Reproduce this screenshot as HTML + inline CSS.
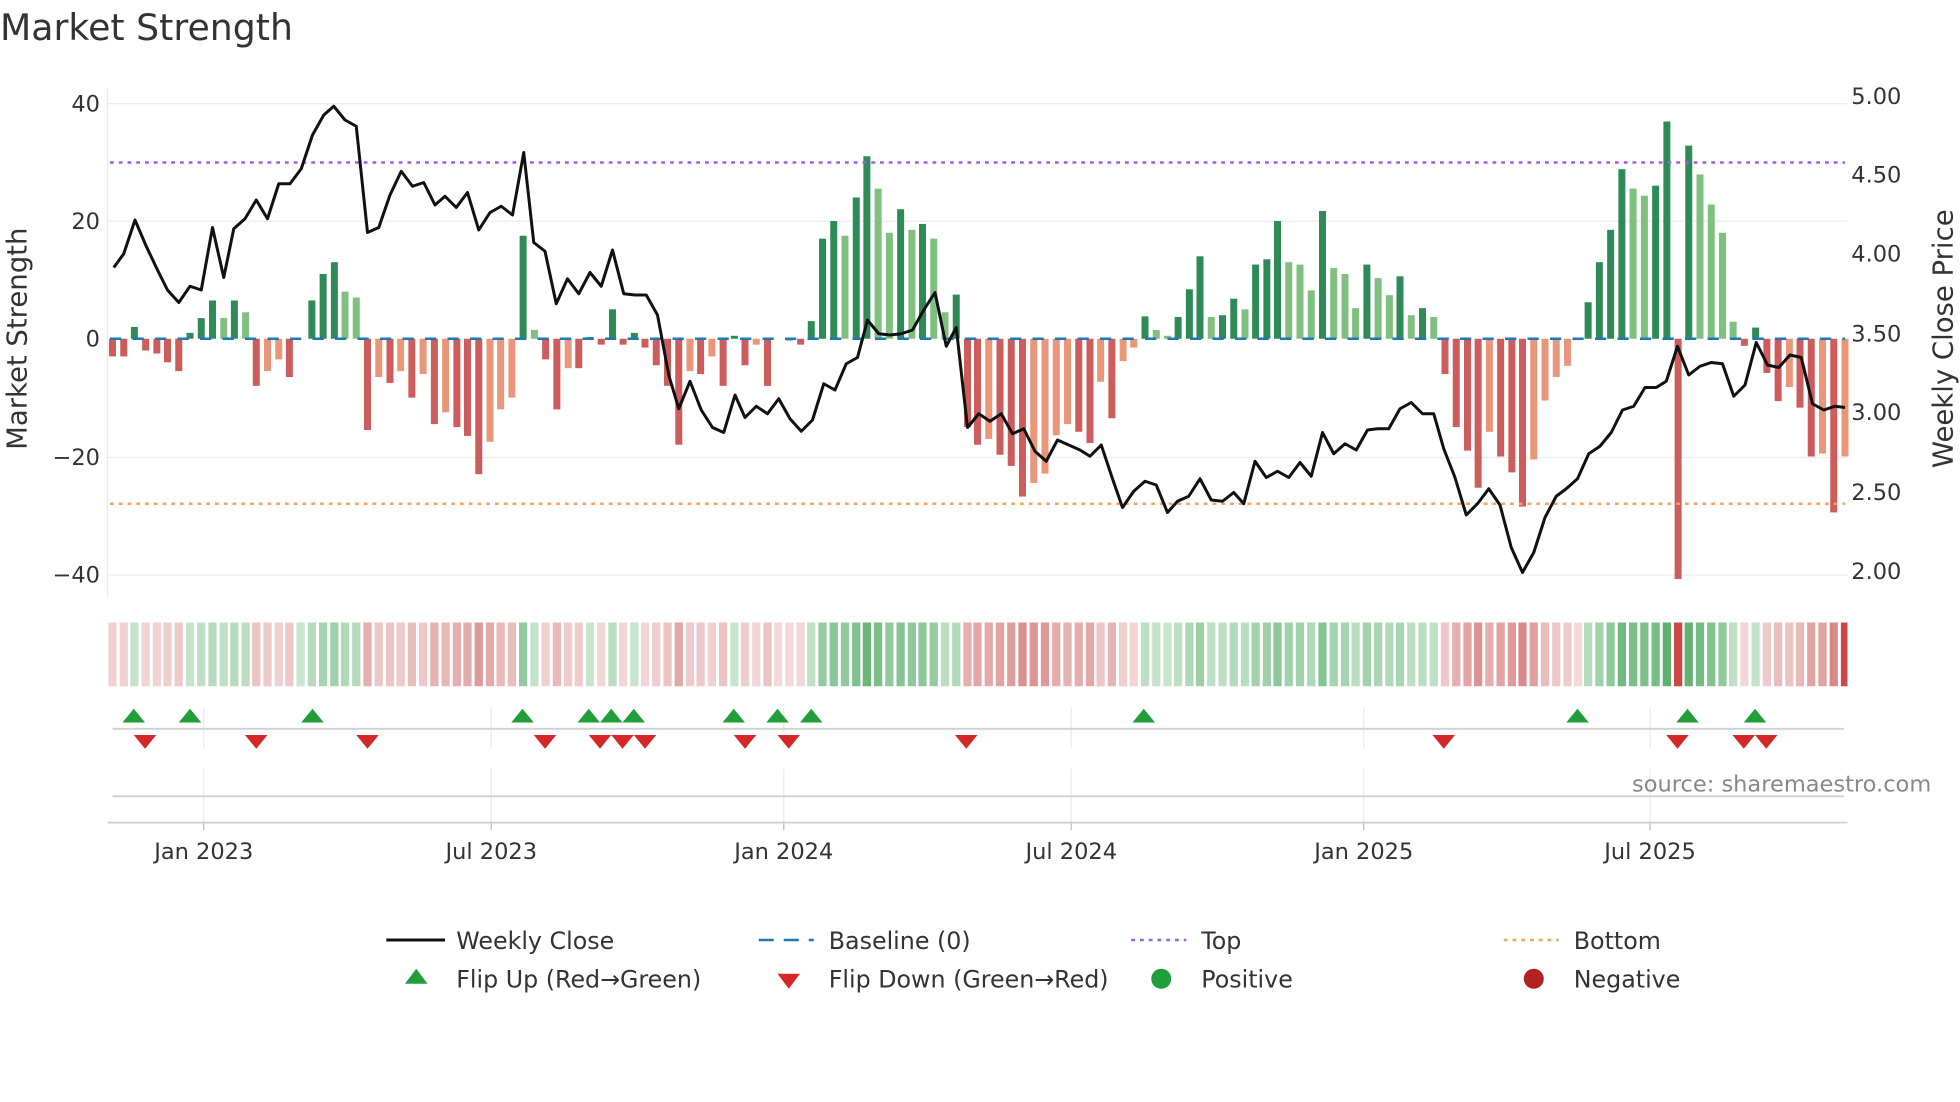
<!DOCTYPE html>
<html><head><meta charset="utf-8"><style>
html,body{margin:0;padding:0;background:#fff;width:1960px;height:1102px;overflow:hidden}
svg{display:block}
text{font-family:"DejaVu Sans","Liberation Sans",sans-serif;fill:#333}
</style></head><body>
<svg id="s" width="1960" height="1102" viewBox="0 0 1568 881.6" xmlns="http://www.w3.org/2000/svg">
<defs><clipPath id="hc"><rect x="86" y="490" width="1392" height="70"/></clipPath></defs>
<text x="0" y="32" font-size="29">Market Strength</text>
<g stroke="#ececf0" stroke-width="1">
<line x1="86" y1="83" x2="1478" y2="83"/><line x1="86" y1="177" x2="1478" y2="177"/><line x1="86" y1="366" x2="1478" y2="366"/><line x1="86" y1="460" x2="1478" y2="460"/>
<line x1="86" y1="70" x2="86" y2="478"/>
</g>
<g font-size="18" text-anchor="end">
<text x="80" y="89">40</text><text x="80" y="183">20</text><text x="80" y="277">0</text><text x="80" y="372">−20</text><text x="80" y="466">−40</text>
</g>
<g font-size="18">
<text x="1481" y="83">5.00</text><text x="1481" y="146">4.50</text><text x="1481" y="209">4.00</text><text x="1481" y="273">3.50</text><text x="1481" y="336">3.00</text><text x="1481" y="400">2.50</text><text x="1481" y="463">2.00</text>
</g>
<text transform="translate(21,271) rotate(-90)" font-size="22" text-anchor="middle">Market Strength</text>
<text transform="translate(1562,271) rotate(-90)" font-size="22" text-anchor="middle">Weekly Close Price</text>
<g id="bars"></g>
<line x1="88" y1="271" x2="1476" y2="271" stroke="#1f77b4" stroke-width="2" stroke-dasharray="9,9"/>
<line x1="88" y1="130" x2="1476" y2="130" stroke="#9b5de5" stroke-width="2" stroke-dasharray="3,4"/>
<line x1="88" y1="403" x2="1476" y2="403" stroke="#f4a261" stroke-width="2" stroke-dasharray="3,4"/>
<polyline id="pl" fill="none" stroke="#111" stroke-width="2.4" stroke-linejoin="round"/>
<g id="heat" clip-path="url(#hc)"></g>
<g stroke="#e8e8ee" stroke-width="1" id="vg"></g>
<line x1="90" y1="583" x2="1475" y2="583" stroke="#d0d0d0" stroke-width="1.5"/>
<line x1="90" y1="637" x2="1475" y2="637" stroke="#d0d0d0" stroke-width="1.5"/>
<line x1="86" y1="658" x2="1478" y2="658" stroke="#d0d0d0" stroke-width="1.5"/>
<g id="tri"></g>
<text x="1545" y="633" font-size="18" text-anchor="end" style="fill:#888">source: sharemaestro.com</text>
<g font-size="18" text-anchor="middle" id="dates"></g>
<g font-size="19">
<line x1="309" y1="752" x2="356" y2="752" stroke="#111" stroke-width="2.4"/><text x="365" y="759">Weekly Close</text>
<line x1="607" y1="752" x2="651" y2="752" stroke="#1f77b4" stroke-width="2" stroke-dasharray="12,8"/><text x="663" y="759">Baseline (0)</text>
<line x1="905" y1="752" x2="949" y2="752" stroke="#9b5de5" stroke-width="2" stroke-dasharray="3,4"/><text x="961" y="759">Top</text>
<line x1="1203" y1="752" x2="1247" y2="752" stroke="#f4a261" stroke-width="2" stroke-dasharray="3,4"/><text x="1259" y="759">Bottom</text>
<polygon points="324,787 342,787 333,775" fill="#1f9e3a"/><text x="365" y="790">Flip Up (Red→Green)</text>
<polygon points="622,779 640,779 631,791" fill="#d62728"/><text x="663" y="790">Flip Down (Green→Red)</text>
<circle cx="929" cy="783" r="8" fill="#1f9e3a"/><text x="961" y="790">Positive</text>
<circle cx="1227" cy="783" r="8" fill="#b22222"/><text x="1259" y="790">Negative</text>
</g>
</svg>
<script>
var NS="http://www.w3.org/2000/svg";
function el(p,t,a){var e=document.createElementNS(NS,t);for(var k in a)e.setAttribute(k,a[k]);p.appendChild(e);return e;}
var z1=[[180,-3,'R'],[198,-3,'R'],[215,2,'G'],[233,-2,'R'],[251,-2.5,'R'],[268,-4,'R'],[286,-5.5,'R'],[304,1,'G'],[322,3.5,'G'],[340,6.5,'G'],[358,3.5,'g'],[375,6.5,'G'],[393,4.5,'g'],[410,-8,'R'],[428,-5.5,'r'],[446,-3.5,'r'],[463,-6.5,'R'],[481,0,'G'],[499,6.5,'G'],[517,11,'G'],[535,13,'G'],[552,8,'g'],[570,7,'g'],[588,-15.5,'R'],[606,-6.5,'r'],[624,-7.5,'R'],[641,-5.5,'r'],[659,-10,'R'],[677,-6,'r'],[695,-14.5,'R'],[713,-12.5,'r'],[731,-15,'R'],[748,-16.5,'R'],[766,-23,'R'],[784,-17.5,'r'],[801,-12,'r'],[819,-10,'r'],[837,17.5,'G'],[855,1.5,'g'],[873,-3.5,'R'],[891,-12,'R'],[909,-5,'r'],[926,-5,'R'],[944,0.3,'G'],[962,-1,'R'],[980,5,'G'],[997,-1,'R'],[1015,1,'G'],[1032,-1.5,'R'],[1050,-4.5,'R'],[1068,-8,'R'],[1086,-18,'R'],[1104,-5.5,'r'],[1121,-6,'R'],[1139,-3,'r'],[1157,-8,'R'],[1175,0.5,'G'],[1192,-4.5,'R'],[1210,-1,'r'],[1228,-8,'R'],[1245,0,'R'],[1263,-0.3,'R'],[1281,-1,'R'],[1298,3,'G'],[1316,17,'G'],[1334,20,'G'],[1352,17.5,'g'],[1370,24,'G'],[1387,31,'G'],[1405,25.5,'g'],[1423,18,'g'],[1441,22,'G'],[1459,18.5,'g'],[1476,19.5,'G'],[1494,17,'g'],[1512,4.5,'g'],[1530,7.5,'G'],[1548,-15,'R']];
var z2=[[-4,-18,'R'],[14,-17,'r'],[32,-19.7,'R'],[50,-21.6,'R'],[68,-26.8,'R'],[86,-24.5,'r'],[104,-22.9,'r'],[122,-16.4,'r'],[140,-14.5,'r'],[158,-15.8,'R'],[176,-17.7,'R'],[193,-7.3,'r'],[211,-13.5,'R'],[229,-3.8,'r'],[246,-1.5,'r'],[264,3.8,'G'],[282,1.5,'g'],[300,0.5,'g'],[317,3.7,'G'],[335,8.4,'G'],[352,14,'G'],[370,3.7,'g'],[388,4,'G'],[406,6.8,'G'],[424,5,'g'],[441,12.6,'G'],[459,13.5,'G'],[476,20,'G'],[494,13,'g'],[512,12.6,'g'],[530,8.2,'g'],[548,21.7,'G'],[566,12,'g'],[584,11,'g'],[601,5.2,'g'],[619,12.6,'G'],[637,10.3,'g'],[655,7.4,'g'],[672,10.6,'G'],[690,4,'g'],[708,5.2,'G'],[726,3.7,'g'],[744,-6,'R'],[762,-15,'R'],[780,-19,'R'],[797,-25.3,'R'],[815,-15.8,'r'],[833,-20,'R'],[851,-22.7,'R'],[868,-28.5,'R'],[886,-20.5,'r'],[904,-10.5,'r'],[922,-6.5,'r'],[940,-4.6,'r'],[957,0,'r'],[973,6.2,'G'],[991,13,'G'],[1009,18.5,'G'],[1027,28.8,'G'],[1045,25.5,'g'],[1063,24.3,'g'],[1081,26,'G'],[1099,36.9,'G'],[1117,-40.8,'R'],[1134,32.8,'G'],[1152,27.9,'g'],[1170,22.8,'g'],[1188,18,'g'],[1205,2.9,'g'],[1223,-1.2,'R'],[1241,1.9,'G'],[1259,-5.8,'R'],[1277,-10.6,'R'],[1295,-8.2,'r'],[1312,-11.7,'R'],[1330,-20,'R'],[1348,-19.5,'r'],[1366,-29.5,'R'],[1384,-20,'r']];
var bars=[];z1.forEach(function(b){bars.push([b[0]/2,b[1],b[2]]);});z2.forEach(function(b){bars.push([784+b[0]/2,b[1],b[2]]);});
var col={G:'#2e8b57',g:'#7fbf7f',R:'#cd5c5c',r:'#e9967a'};
var bg=document.getElementById('bars'),hg=document.getElementById('heat');
bars.forEach(function(b,i){var x=b[0],v=b[1],h=Math.abs(v)*4.71;
 if(h>0.3)el(bg,'rect',{x:x-2.8,y:v>0?271-h:271,width:5.6,height:h,fill:col[b[2]]});
 var t=Math.min(1,Math.abs(v)/35);var pos=(b[2]=='G'||b[2]=='g');
 var c=pos?'rgba(60,160,80,'+(0.28+0.55*t)+')':'rgba(200,80,80,'+(0.22+0.55*t)+')';
 if(i==bars.length-1||v<-40)c='rgba(200,60,60,0.95)';
 el(hg,'rect',{x:x-3.3,y:498,width:6.6,height:51,fill:c});
});
var pts=[[91,214],[99,203],[108,176],[117,197],[126,216],[134,232],[143,242],[152,229],[161,232],[170,182],[179,222],[187,183],[196,175],[205,160],[214,175],[223,147],[232,147],[241,135],[250,108],[259,92],[267,85],[276,96],[285,101],[294,186],[303,182],[312,156],[321,137],[330,149],[339,146],[348,164],[356,157],[365,166],[374,154],[383,184],[392,170],[401,165],[410,172],[419,122],[427,194],[436,201],[445,243],[454,223],[463,235],[472,218],[481,229],[490,200],[499,235],[508,236],[517,236],[526,252],[535,300],[543,327],[552,305],[561,328],[570,342],[579,346],[588,316],[596,334],[605,325],[614,331],[623,319],[632,335],[641,345],[650,336],[659,307],[668,312],[677,291],[686,286],[694,256],[703,267],[712,268],[721,267],[730,264],[739,248],[748,234],[757,277],[765,262],[774,342],[783,331],[792,337],[801,331],[810,347],[819,343],[828,361],[837,369],[846,352],[855,356],[864,360],[872,365],[881,356],[890,383],[898,406],[907,393],[916,385],[925,388],[934,410],[942,401],[951,397],[960,383],[969,400],[978,401],[987,394],[995,403],[1004,369],[1013,382],[1022,377],[1031,382],[1040,370],[1049,381],[1058,346],[1067,363],[1076,355],[1085,360],[1094,344],[1102,343],[1111,343],[1120,327],[1129,322],[1138,331],[1147,331],[1155,359],[1164,382],[1173,412],[1182,403],[1191,391],[1200,404],[1209,438],[1218,458],[1227,442],[1236,414],[1245,397],[1253,391],[1262,383],[1271,363],[1280,357],[1289,346],[1298,328],[1307,325],[1316,310],[1325,310],[1333,305],[1342,277],[1351,300],[1360,293],[1369,290],[1378,291],[1387,317],[1396,308],[1405,274],[1414,292],[1423,294],[1432,284],[1441,286],[1450,323],[1459,328],[1468,325],[1476,326]];
document.getElementById('pl').setAttribute('points',pts.map(function(p){return p.join(',');}).join(' '));
var tg=document.getElementById('tri');
[107,152,250,418,471,489,507,587,622,649,915,1262,1350,1404].forEach(function(x){el(tg,'polygon',{points:(x-9)+',578 '+(x+9)+',578 '+x+',567',fill:'#1f9e3a'});});
[116,205,294,436,480,498,516,596,631,773,1155,1342,1395,1413].forEach(function(x){el(tg,'polygon',{points:(x-9)+',588 '+(x+9)+',588 '+x+',599',fill:'#d62728'});});
var vg=document.getElementById('vg'),dg=document.getElementById('dates');
[[163,'Jan 2023'],[393,'Jul 2023'],[627,'Jan 2024'],[857,'Jul 2024'],[1091,'Jan 2025'],[1320,'Jul 2025']].forEach(function(d){
 el(vg,'line',{x1:d[0],y1:566,x2:d[0],y2:598});el(vg,'line',{x1:d[0],y1:615,x2:d[0],y2:658});
 el(vg,'line',{x1:d[0],y1:658,x2:d[0],y2:664,stroke:'#bbb'});
 var t=el(dg,'text',{x:d[0],y:687});t.textContent=d[1];});
</script>
</body></html>
